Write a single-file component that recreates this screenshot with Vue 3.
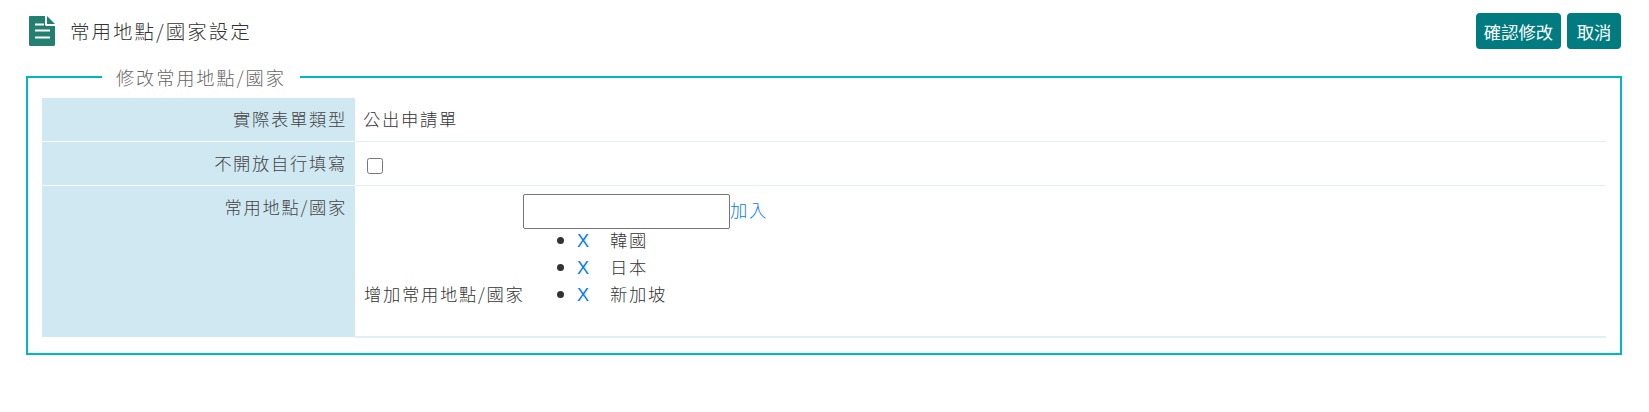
<template>
  <div class="page">
    <header class="top">
      <div class="title">
        <svg class="doc-icon" viewBox="0 0 26 30" width="26" height="30">
          <path d="M1 0H16V8.500C16 9.300 16.700 10 17.500 10H26V28.500C26 29.300 25.300 30 24.500 30H1.500C.7 30 0 29.300 0 28.500V1C0 .4 .4 0 1 0Z" fill="#237f6e"/>
          <path d="M18 0L26 8H18Z" fill="#237f6e"/>
          <path d="M6 8.500H15M6 14.500H21M6 21.500H21" stroke="#fff" stroke-width="2" fill="none"/>
        </svg>
        <h1>常用地點/國家設定</h1>
      </div>
      <div class="actions">
        <button type="button" class="btn">確認修改</button>
        <button type="button" class="btn">取消</button>
      </div>
    </header>

    <fieldset class="panel">
      <legend>修改常用地點/國家</legend>
      <table class="form">
        <tbody>
          <tr>
            <th>實際表單類型</th>
            <td>公出申請單</td>
          </tr>
          <tr class="open">
            <th>不開放自行填寫</th>
            <td><input type="checkbox" class="check" /></td>
          </tr>
          <tr class="places">
            <th>常用地點/國家</th>
            <td>
              <div class="add">
                <label for="place">增加常用地點/國家</label>
                <div class="add-box">
                  <div class="add-line">
                    <input id="place" type="text" v-model="place" />
                    <a href="#" class="link" @click.prevent="addPlace">加入</a>
                  </div>
                  <ul>
                    <li v-for="(item, index) in places" :key="item">
                      <a href="#" class="link remove" @click.prevent="places.splice(index, 1)">X</a>
                      <span>{{ item }}</span>
                    </li>
                  </ul>
                </div>
              </div>
            </td>
          </tr>
        </tbody>
      </table>
    </fieldset>
  </div>
</template>

<script setup>
import { ref } from 'vue'

const place = ref('')
const places = ref(['韓國', '日本', '新加坡'])

function addPlace() {
  if (!place.value) return
  places.value.push(place.value)
  place.value = ''
}
</script>

<style scoped>
.page {
  width: 1649px;
  height: 412px;
  box-sizing: border-box;
  padding: 13px 27px 0 26px;
  background: #fff;
  color: #333;
  font-family: "Noto Sans CJK TC", "Noto Sans", sans-serif;
  font-size: 17.300px;
  font-weight: 300;
  letter-spacing: 1.700px;
}

.top {
  display: flex;
  justify-content: space-between;
  align-items: flex-start;
  height: 52px;
}

.title {
  display: flex;
  align-items: center;
  gap: 15px;
  padding: 3px 0 0 3px;
}

h1 {
  margin: 0;
  font-size: 19.500px;
  font-weight: 300;
  letter-spacing: 2px;
  line-height: 30px;
}

.actions {
  display: flex;
  gap: 6px;
  margin-right: 1px;
}

.btn {
  height: 36px;
  min-width: 54px;
  padding: 0 8px;
  border: 0;
  border-radius: 4px;
  background: #007b80;
  color: #fff;
  font: inherit;
  font-size: 17.300px;
  font-weight: 400;
  letter-spacing: 0;
}

.panel {
  margin: 0;
  min-width: 0;
  padding: 9px 14px 15px;
  border: 2px solid #00b7c3;
}

legend {
  margin-left: 60px;
  padding: 0 14px;
  color: #666;
  font-size: 18.200px;
  letter-spacing: 1.900px;
  line-height: 24px;
}

.form {
  width: 100%;
  border-collapse: collapse;
}

th {
  width: 313px;
  box-sizing: border-box;
  padding: 8px 8px 0 0;
  background: #cfe8f2;
  border-bottom: 1px solid #fff;
  color: #444;
  font-weight: 300;
  text-align: right;
  vertical-align: top;
}

td {
  height: 43px;
  box-sizing: border-box;
  padding: 8px 8px 0;
  border-bottom: 1px solid #e3eff6;
  vertical-align: top;
}

.open td {
  height: 44px;
}

tr:last-child th {
  border-bottom: 0;
}

tr:last-child td {
  border-bottom-width: 2px;
}

.check {
  display: block;
  width: 16px;
  height: 16px;
  margin: 8px 0 0 4px;
}

.places td {
  padding: 8px 8px 0;
  height: 152px;
}

.add {
  display: flex;
  align-items: flex-start;
}

label {
  align-self: flex-end;
  color: #333;
  line-height: 26px;
  margin: 0 0 29px 1px;
  white-space: nowrap;
  width: 159px;
}

.add-line {
  display: flex;
  align-items: center;
}

.add-line input {
  width: 207px;
  height: 35px;
  box-sizing: border-box;
  padding: 1px 2px;
  border: 1px solid #767676;
  border-radius: 2px;
}

.link {
  color: #007bff;
  text-decoration: none;
}

.add-line .link {
  margin: 0 0 3px 0;
}

ul {
  margin: -2px 0 28px;
  padding: 0 0 0 54px;
  line-height: 26px;
}

.remove {
  display: inline-block;
  width: 33px;
  font-family: "Liberation Sans", sans-serif;
  font-size: 18px;
  letter-spacing: 0;
}
</style>
